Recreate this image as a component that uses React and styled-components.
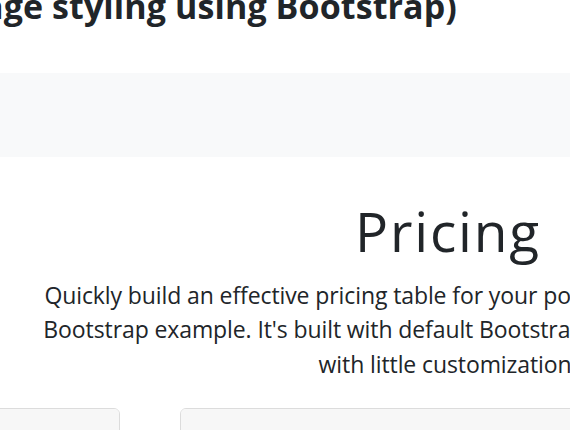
import React from "react";
import styled, { createGlobalStyle } from "styled-components";

const Global = createGlobalStyle`
  html, body {
    margin: 0;
    padding: 0;
    background: #ffffff;
    overflow: hidden;
  }
  body {
    width: 570px;
    height: 430px;
    font-family: "Open Sans", "Noto Sans", "Liberation Sans", sans-serif;
    color: #212529;
  }
`;

const Viewport = styled.div`
  width: 570px;
  height: 430px;
  overflow: hidden;
  display: flex;
  flex-direction: column;
`;

const TitleBar = styled.div`
  width: 457px;
  display: flex;
  justify-content: flex-end;
  margin-top: -14px;
`;

const PageTitle = styled.h1`
  margin: 0;
  flex: none;
  white-space: nowrap;
  font-size: 34px;
  line-height: 1.2;
  font-weight: 700;
  letter-spacing: 0.1px;
  color: #212529;
`;

const NavBand = styled.div`
  margin-top: 46px;
  height: 84px;
  background: #f8f9fa;
  flex: none;
`;

const Stage = styled.div`
  width: 896px;
  display: flex;
  flex-direction: column;
  align-items: center;
  text-align: center;
  flex: none;
`;

const Display = styled.h2`
  margin: 41px 0 0;
  font-size: 55px;
  line-height: 1.2;
  font-weight: 400;
  letter-spacing: 1.8px;
  color: #212529;
`;

const Lead = styled.p`
  margin: 14px 0 0;
  font-size: 23px;
  line-height: 1.5;
  font-weight: 400;
  letter-spacing: -0.1px;
  color: #212529;
  display: flex;
  flex-direction: column;
  align-items: center;
`;

const LeadLine = styled.span`
  white-space: nowrap;
`;

const CardRow = styled.div`
  margin-top: 27px;
  width: 896px;
  display: flex;
  justify-content: center;
  gap: 60px;
`;

const Card = styled.div`
  flex: none;
  width: 534px;
  height: 220px;
  border: 1px solid #dcdcdc;
  border-radius: 6px;
  overflow: hidden;
  background: #ffffff;
`;

const CardHeader = styled.div`
  height: 64px;
  background: #f7f7f7;
  border-bottom: 1px solid #dcdcdc;
`;

const lines = [
  "Quickly build an effective pricing table for your potential customers with this",
  "Bootstrap example. It's built with default Bootstrap components and utilities",
  "with little customization.",
];

export default function App() {
  return (
    <>
      <Global />
      <Viewport>
        <TitleBar>
          <PageTitle>(Pricing page styling using Bootstrap)</PageTitle>
        </TitleBar>
        <NavBand />
        <Stage>
          <Display>Pricing</Display>
          <Lead>
            {lines.map((l) => (
              <LeadLine key={l}>{l}</LeadLine>
            ))}
          </Lead>
        </Stage>
        <CardRow>
          <Card>
            <CardHeader />
          </Card>
          <Card>
            <CardHeader />
          </Card>
          <Card>
            <CardHeader />
          </Card>
        </CardRow>
      </Viewport>
    </>
  );
}
